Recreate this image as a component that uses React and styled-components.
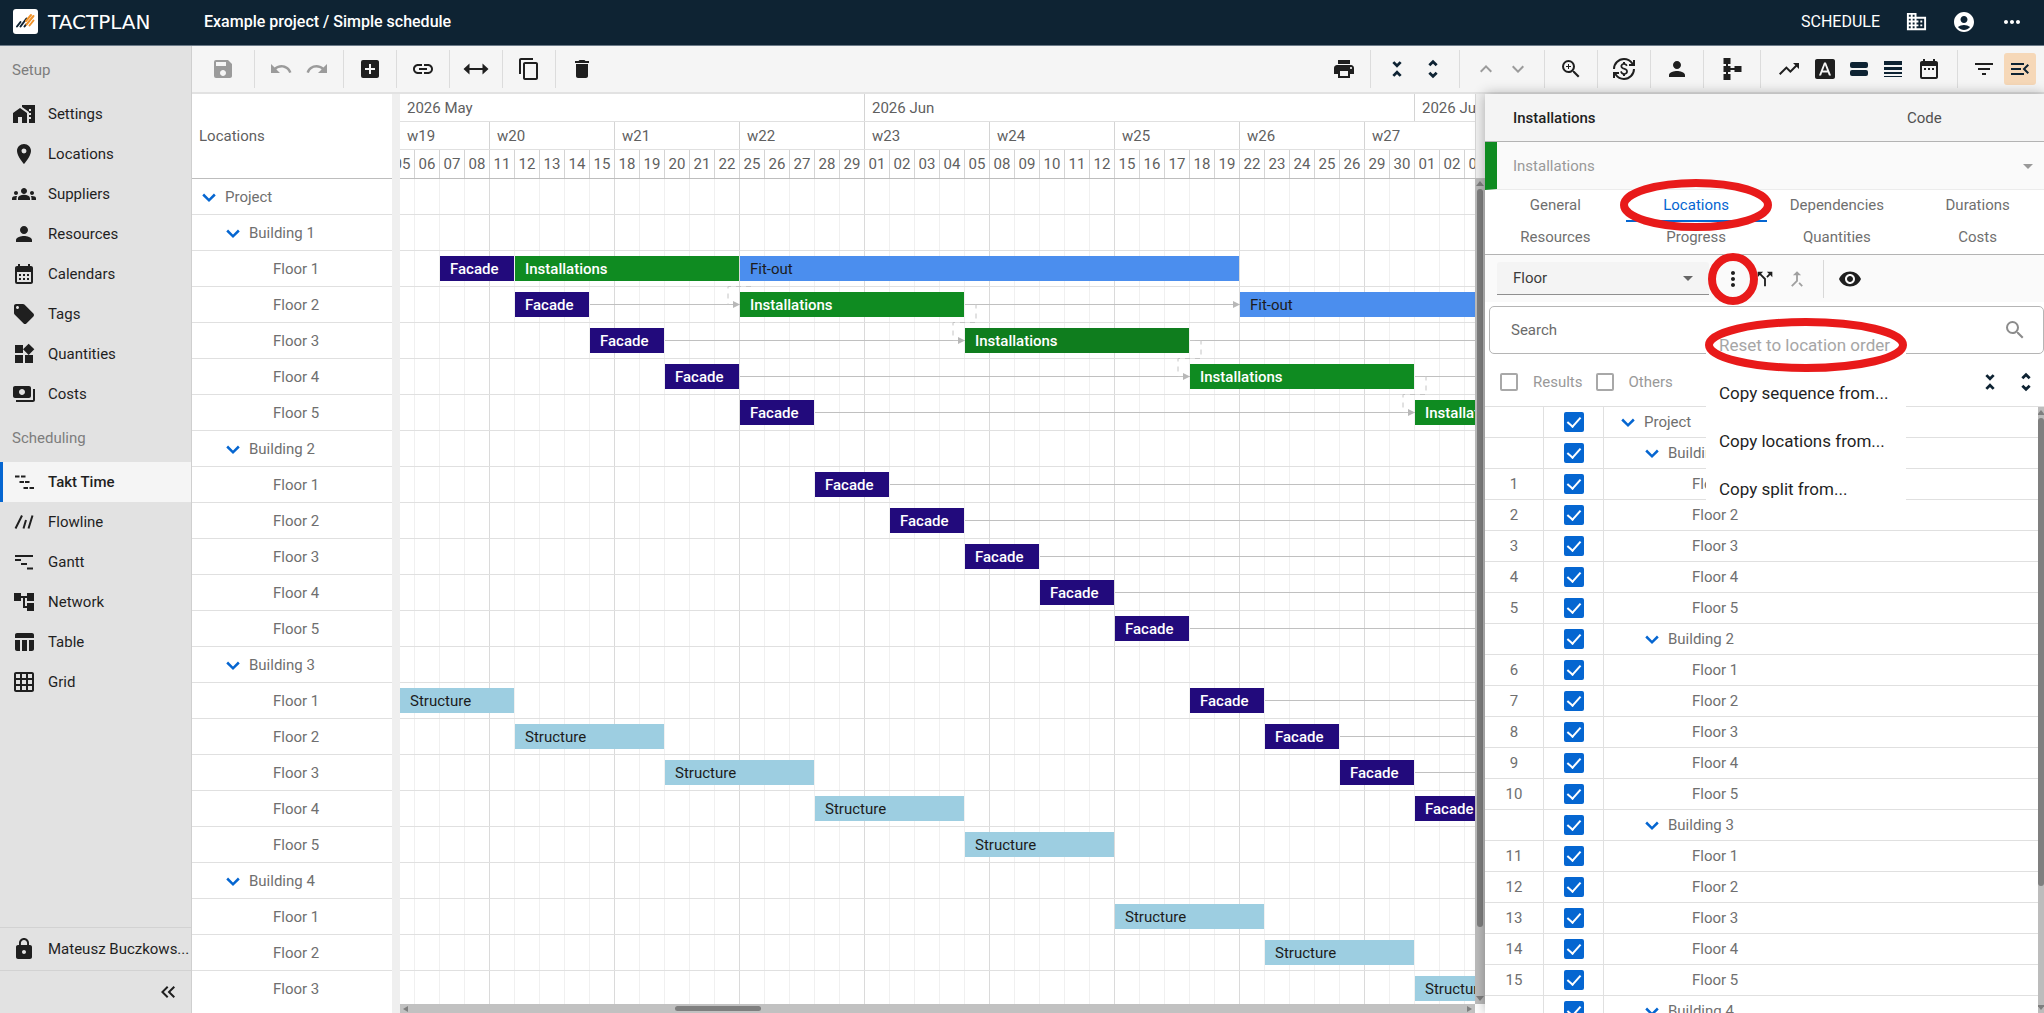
import React from "react"
import styled, { createGlobalStyle, css } from "styled-components"
import {
  MdAccountCircle,
  MdAccountTree,
  MdAddBox,
  MdArrowDropDown,
  MdCalendarMonth,
  MdCallMerge,
  MdCallSplit,
  MdContentCopy,
  MdCurrencyExchange,
  MdDateRange,
  MdDelete,
  MdDomain,
  MdFilterList,
  MdFontDownload,
  MdGridOn,
  MdGroups,
  MdHomeWork,
  MdKeyboardArrowDown,
  MdKeyboardArrowUp,
  MdKeyboardDoubleArrowLeft,
  MdLink,
  MdLocalOffer,
  MdLocationOn,
  MdLock,
  MdMenuOpen,
  MdMoreHoriz,
  MdMoreVert,
  MdPayments,
  MdPerson,
  MdPrint,
  MdRedo,
  MdSave,
  MdSearch,
  MdTableChart,
  MdTrendingUp,
  MdUndo,
  MdVisibility,
  MdWidgets,
  MdZoomIn,
} from "react-icons/md"

const colors = {
  navy: "#0e2333",
  blue: "#0566d1",
  line: "#e0e0e0",
  lineDark: "#bdbdbd",
  text: "#1f1f1f",
  muted: "#6f6f6f",
  facade: "#220a7c",
  installations: "#0f8b21",
  fitout: "#4b8eee",
  structure: "#9dcee1",
  marker: "#e81a1a",
}

const GlobalStyle = createGlobalStyle`
  * {
    box-sizing: border-box;
  }
  body {
    margin: 0;
    font-family: Roboto, "Liberation Sans", sans-serif;
    font-size: 15px;
    color: ${colors.text};
    background: #fff;
    overflow: hidden;
  }
  button, input, select {
    font: inherit;
    color: inherit;
    border: 0;
    padding: 0;
    margin: 0;
    background: none;
  }
  svg {
    display: block;
    flex-shrink: 0;
  }
`

const Page = styled.div`
  display: flex;
  flex-direction: column;
  height: 100vh;
`

/* ---------- top bar ---------- */

const TopBar = styled.header`
  display: flex;
  align-items: center;
  flex: 0 0 46px;
  padding: 0 8px 2px 13px;
  background: ${colors.navy};
  border-bottom: 1px solid #6b7a88;
  color: #fff;
`
const Brand = styled.a`
  display: flex;
  align-items: center;
  gap: 10px;
  width: 191px;
  color: #fff;
  text-decoration: none;
  font-family: "DejaVu Sans", sans-serif;
  font-size: 20px;
`
const Title = styled.h1`
  flex: 1;
  margin: 0;
  font-size: 16px;
  font-weight: 500;
`
const ScheduleLink = styled.a`
  color: #fff;
  font-size: 16px;
  text-decoration: none;
  margin-right: 12px;
`
const TopButton = styled.button`
  display: grid;
  place-items: center;
  width: 48px;
  height: 40px;
`

/* ---------- sidebar ---------- */

const Main = styled.div`
  display: flex;
  flex: 1;
  min-height: 0;
`
const Sidebar = styled.nav`
  display: flex;
  flex-direction: column;
  flex: 0 0 192px;
  min-width: 0;
  background: #e2e2e2;
  border-right: 1px solid #cfcfcf;
`
const SectionLabel = styled.div`
  padding: 0 12px;
  line-height: 48px;
  color: #7d7d7d;
`
const NavItem = styled.a`
  display: flex;
  align-items: center;
  gap: 12px;
  height: 40px;
  padding-left: 9px;
  border-left: 3px solid transparent;
  color: ${colors.text};
  text-decoration: none;
  ${p =>
    p.$active &&
    css`
      background: #f5f5f5;
      border-color: ${colors.blue};
      font-weight: 500;
    `};
`
const SidebarFooter = styled.div`
  margin-top: auto;
`
const UserRow = styled.a`
  display: flex;
  align-items: center;
  gap: 12px;
  height: 44px;
  padding-left: 12px;
  border-top: 1px solid #d2d2d2;
  border-bottom: 1px solid #d2d2d2;
  color: ${colors.text};
  text-decoration: none;
  white-space: nowrap;
`
const CollapseRow = styled.div`
  display: flex;
  justify-content: flex-end;
  align-items: center;
  height: 42px;
  padding-right: 11px;
`

/* ---------- toolbar ---------- */

const Content = styled.main`
  display: flex;
  flex-direction: column;
  flex: 1;
  min-width: 0;
`
const ToolbarRow = styled.div`
  display: flex;
  align-items: center;
  flex: 0 0 48px;
  background: #f5f5f5;
  border-bottom: 2px solid #e2e2e2;
`
const Spacer = styled.div`
  flex: 1;
`
const ToolGroup = styled.div`
  display: flex;
  align-items: center;
  gap: ${p => p.$gap || 0}px;
  height: 38px;
  padding: 0 ${p => p.$pad || 8}px;
  border-right: ${p => (p.$last ? "0" : "1px solid #dcdcdc")};
`
const ToolButton = styled.button`
  display: grid;
  place-items: center;
  width: ${p => (p.$tight ? 32 : 36)}px;
  height: 32px;
  border-radius: 3px;
  color: ${p => (p.$on ? colors.navy : colors.text)};
  background: ${p => (p.$on ? "#f6d8b8" : "none")};
  &:disabled {
    color: #9b9b9b;
  }
`

/* ---------- schedule ---------- */

const Workspace = styled.div`
  display: flex;
  flex: 1;
  min-height: 0;
`
const LocationTree = styled.div`
  flex: 0 0 200px;
  overflow: hidden;
`
const TreeHeader = styled.div`
  display: flex;
  align-items: center;
  height: 85px;
  padding-left: 7px;
  border-bottom: 1px solid ${colors.lineDark};
  color: #5f5f5f;
`
const TreeRow = styled.div`
  display: flex;
  align-items: center;
  height: 36px;
  padding-left: ${p => 5 + p.$level * 24}px;
  border-bottom: 1px solid ${colors.line};
  color: ${colors.muted};
  &:last-child {
    border-bottom: 0;
  }
`
const Toggle = styled.button`
  display: grid;
  place-items: center;
  width: 24px;
  height: 24px;
  margin-right: 4px;
  color: ${colors.blue};
`
const ToggleGap = styled.span`
  width: 28px;
`
const Splitter = styled.div`
  flex: 0 0 8px;
  background: #efefef;
`
const Timeline = styled.section`
  display: flex;
  flex-direction: column;
  flex: 1;
  min-width: 0;
`
const Clip = styled.div`
  flex: ${p => (p.$grow ? "1" : "none")};
  overflow: hidden;
`
const DayGrid = styled.div`
  display: grid;
  grid-template-columns: repeat(45, 25px);
  margin-left: -10px;
  height: ${p => p.$height}px;
  border-bottom: 1px solid ${p => p.$border || colors.line};
`
const HeadCell = styled.div`
  grid-column: span ${p => p.$span};
  display: flex;
  align-items: center;
  justify-content: ${p => (p.$span === 1 ? "center" : "flex-start")};
  padding-left: ${p => (p.$span === 1 ? 0 : p.$first ? 17 : 7)}px;
  border-right: 1px solid #d4d4d4;
  color: #5f5f5f;
  white-space: nowrap;
  overflow: hidden;
`
const Canvas = styled.div`
  position: relative;
  background-image: linear-gradient(90deg, #dadada 1px, transparent 1px),
    linear-gradient(90deg, #f0f0f0 1px, transparent 1px);
  background-size: 125px 100%, 25px 100%;
  background-position: 89px 0, 14px 0;
`
const Bar = styled.div`
  grid-row: 1;
  grid-column: ${p => p.$from + 1} / ${p => p.$to + 1};
  align-self: center;
  display: flex;
  align-items: center;
  height: 25px;
  padding-left: ${p => (p.$from === 0 ? 20 : 10)}px;
  margin-right: 1px;
  background: ${p => p.$color};
  color: ${p => (p.$light ? "#fff" : "#1c1c1c")};
  font-weight: ${p => (p.$light ? 500 : 400)};
  white-space: nowrap;
  overflow: hidden;
`
const Link = styled.div`
  grid-row: 1;
  grid-column: ${p => p.$from + 1} / ${p => p.$to + 1};
  align-self: center;
  height: 1px;
  background: #c0c0c0;
`
const Dashes = styled.svg`
  position: absolute;
  inset: 0;
  pointer-events: none;
`
const TrackY = styled.div`
  display: flex;
  flex-direction: column;
  align-items: center;
  flex: 0 0 ${p => p.$size}px;
  overflow: hidden;
`
const TrackHead = styled.div`
  flex: 0 0 84px;
  align-self: stretch;
  background: #f1f1f1;
  border-left: 1px solid #d8d8d8;
`
const TrackBody = styled.div`
  display: flex;
  flex-direction: column;
  align-items: center;
  justify-content: space-between;
  flex: 1;
  align-self: stretch;
  padding: 3px 0;
  background: #bcbcbc;
`
const TrackFoot = styled.div`
  flex: 0 0 9px;
`
const ThumbY = styled.div`
  flex: 0 0 ${p => p.$length};
  width: 6px;
  margin-top: 3px;
  border-radius: 3px;
  background: #7f7f7f;
`
const Arrow = styled.i`
  width: 0;
  height: 0;
  border: 4px solid transparent;
  ${p => p.$dir === "up" && "border-bottom: 5px solid #7f7f7f; border-top: 0;"}
  ${p => p.$dir === "down" && "border-top: 5px solid #7f7f7f; border-bottom: 0;"}
  ${p => p.$dir === "left" && "border-right: 5px solid #7f7f7f; border-left: 0; border-top-width: 3px; border-bottom-width: 3px;"}
  ${p => p.$dir === "right" && "border-left: 5px solid #7f7f7f; border-right: 0; border-top-width: 3px; border-bottom-width: 3px;"}
`
const TrackX = styled.div`
  display: flex;
  align-items: center;
  flex: 0 0 9px;
  padding: 0 3px;
  background: #c1c1c1;
`
const ThumbX = styled.div`
  width: 8%;
  height: 5px;
  margin-left: 25%;
  margin-right: auto;
  border-radius: 3px;
  background: #7f7f7f;
`

/* ---------- details panel ---------- */

const Panel = styled.aside`
  position: relative;
  display: flex;
  flex-direction: column;
  flex: 0 0 559px;
  background: #fff;
  box-shadow: 0 0 12px rgba(0, 0, 0, 0.3);
`
const PanelHead = styled.div`
  display: grid;
  grid-template-columns: 394px 1fr;
  align-items: center;
  flex: 0 0 48px;
  padding-left: 28px;
  background: #f4f4f4;
  border-bottom: 1px solid #b3b3b3;
  color: #505050;
`
const PanelTitle = styled.h2`
  margin: 0;
  font-size: 15px;
  font-weight: 500;
  color: ${colors.text};
`
const TaskField = styled.label`
  display: flex;
  align-items: center;
  flex: 0 0 48px;
  padding-right: 4px;
  background: #fafafa;
  border-left: 12px solid ${colors.installations};
  border-bottom: 1px solid #ececec;
  color: #999;
`
const PlainSelect = styled.select`
  appearance: none;
  flex: 1;
  height: 32px;
  padding-left: 16px;
  outline: 0;
  opacity: 1;
`
const Tabs = styled.div`
  display: grid;
  grid-template-columns: repeat(4, 1fr);
  grid-auto-rows: 32px;
  flex: none;
  margin-right: -4px;
  border-bottom: 1px solid #b3b3b3;
`
const Tab = styled.button`
  position: relative;
  color: ${p => (p.$active ? colors.blue : colors.muted)};
  border-bottom: 2px solid ${p => (p.$active ? colors.blue : "transparent")};
`
const Ring = styled.svg`
  position: absolute;
  left: 50%;
  top: 50%;
  transform: translate(-50%, -50%);
  z-index: 3;
  fill: none;
  stroke: ${colors.marker};
  stroke-width: 8;
  pointer-events: none;
`
const StripRow = styled.div`
  display: flex;
  align-items: center;
  flex: 0 0 47px;
  padding-left: 12px;
  background: #fafafa;
`
const LevelField = styled.label`
  display: flex;
  align-items: center;
  width: 212px;
  margin-right: 8px;
  padding-right: 9px;
  color: #3c3c3c;
  background: #f4f4f4;
  border-bottom: 1px solid #8f8f8f;
  border-radius: 3px 3px 0 0;
  svg {
    color: #666;
  }
`
const StripButton = styled.button`
  position: relative;
  display: grid;
  place-items: center;
  width: 32px;
  height: 32px;
  &:disabled {
    color: #a0a0a0;
  }
`
const StripDivider = styled.span`
  width: 1px;
  height: 38px;
  margin: 0 10px;
  background: #d8d8d8;
`
const SearchField = styled.label`
  display: flex;
  align-items: center;
  flex: 0 0 48px;
  margin: 4px 0 0 4px;
  padding: 0 16px 0 21px;
  border: 1px solid #b5b5b5;
  border-radius: 5px;
  color: #8c8c8c;
`
const SearchInput = styled.input`
  flex: 1;
  outline: 0;
  color: #333;
  &::placeholder {
    color: #6b6b6b;
    opacity: 1;
  }
`
const FilterRow = styled.div`
  display: flex;
  align-items: center;
  flex: 0 0 52px;
  padding: 4px 0 0 15px;
  color: #999;
`
const FilterLabel = styled.label`
  display: flex;
  align-items: center;
  gap: 15px;
  margin-right: 13px;
`
const Check = styled.input`
  appearance: none;
  display: block;
  width: ${p => (p.$large ? 20 : 18)}px;
  height: ${p => (p.$large ? 20 : 18)}px;
  border: 2px solid #a8a8a8;
  border-radius: 2px;
  &:checked {
    background: ${colors.blue};
    border-color: ${colors.blue};
  }
  &:checked::after {
    content: "";
    display: block;
    width: 6px;
    height: 11px;
    margin: 0 auto;
    border: solid #fff;
    border-width: 0 2px 2px 0;
    transform: rotate(42deg);
  }
`
const ListArea = styled.div`
  display: flex;
  flex: 1;
  min-height: 0;
  overflow: hidden;
  border-top: 1px solid ${colors.line};
`
const ListClip = styled.div`
  flex: 1;
  overflow: hidden;
`
const LocationTable = styled.table`
  width: 100%;
  table-layout: fixed;
  border-collapse: separate;
  border-spacing: 0;
  color: ${colors.muted};
`
const Cell = styled.td`
  width: ${p => p.$width || "auto"};
  height: 31px;
  padding: 0;
  text-align: ${p => (p.$center ? "center" : "left")};
  border-bottom: 1px solid ${colors.line};
  border-right: ${p => (p.$width ? "1px solid " + colors.line : "0")};
  input {
    margin: 0 auto;
  }
`
const CellTree = styled.div`
  display: flex;
  align-items: center;
  padding-left: ${p => 12 + p.$level * 24}px;
`
const Menu = styled.ul`
  position: absolute;
  top: 231px;
  left: 221px;
  z-index: 2;
  display: flex;
  flex-direction: column;
  gap: 8px;
  width: 200px;
  margin: 0;
  padding: 0;
  list-style: none;
  background: #fff;
`
const MenuItem = styled.li`
  position: relative;
`
const MenuButton = styled.button`
  width: 100%;
  height: 40px;
  padding-left: 13px;
  text-align: left;
  white-space: nowrap;
  font-size: 17px;
  &:disabled {
    color: #a6a6a6;
  }
`

/* ---------- drawn icons ---------- */

const Logo = () => (
  <svg width="25" height="25" viewBox="0 0 25 25">
    <rect width="25" height="25" rx="3" fill="#fff" />
    <g strokeWidth="2" strokeLinecap="round" fill="none">
      <path d="M4 17.500l3.500-4.500M7.500 17.500l6-8M11.500 17.500l1.500-2" stroke={colors.navy} />
      <path d="M13 12l5-6M13.500 15.500l7-8.500M16.500 16.500l4-5" stroke="#f0932b" />
    </g>
  </svg>
)

const Icon = ({ d, size = 24, width = 2, fill = "none", stroke = "currentColor" }) => (
  <svg width={size} height={size} viewBox="0 0 24 24" fill={fill} stroke={stroke} strokeWidth={width}>
    <path d={d} />
  </svg>
)

const ArrowsIcon = () => (
  <svg width="26" height="24" viewBox="0 0 26 24" fill="currentColor">
    <path d="M.500 12l6-5.500V11h13V6.500l6 5.500-6 5.500V13h-13v4.500z" />
  </svg>
)
const FoldIcon = () => <Icon d="M8 4.500l4 4 4-4M8 19.500l4-4 4 4" size={22} width={3} stroke={colors.navy} />
const UnfoldIcon = () => <Icon d="M8 8l4-4 4 4M8 16l4 4 4-4" size={22} width={3} stroke={colors.navy} />
const TaktIcon = () => <Icon d="M3 6.500h4.500M9 6.500h4.500M7.500 12h4.500M13 12h4.500M11.500 18h4.500M17.500 18h4.500" />
const FlowlineIcon = () => <Icon d="M3.500 18.500L10 5.500M11.500 18.500L14 10M16.500 18.500L20.500 5.500" />
const GanttIcon = () => <Icon d="M3 6h18M3 10h6M9 14h6M15 18.500h6" />
const BranchIcon = () => (
  <svg width="24" height="24" viewBox="0 0 24 24" fill="currentColor">
    <path d="M3.500 1h7v6h-2.500v2h2.500v2h4V9h7v6h-7v-2h-4v2H8v2h2.500v6h-7v-6H6v-2H3.500V9H6V7H3.500z" />
  </svg>
)
const BarsIcon = () => (
  <svg width="20" height="20" viewBox="0 0 20 20" fill={colors.navy}>
    <rect x="1" y="3" width="18" height="6" rx="2" />
    <rect x="1" y="11" width="18" height="6" rx="2" />
  </svg>
)
const LinesIcon = () => (
  <svg width="20" height="20" viewBox="0 0 20 20" fill={colors.navy}>
    <rect x="1" y="2" width="18" height="4" />
    <rect x="1" y="8" width="18" height="3" />
    <rect x="1" y="13" width="18" height="2" />
    <rect x="1" y="17" width="18" height="1" />
  </svg>
)

/* ---------- data ---------- */

const setupItems = [
  ["Settings", MdHomeWork],
  ["Locations", MdLocationOn],
  ["Suppliers", MdGroups],
  ["Resources", MdPerson],
  ["Calendars", MdCalendarMonth],
  ["Tags", MdLocalOffer],
  ["Quantities", MdWidgets],
  ["Costs", MdPayments],
]
const schedulingItems = [
  ["Takt Time", TaktIcon],
  ["Flowline", FlowlineIcon],
  ["Gantt", GanttIcon],
  ["Network", MdAccountTree],
  ["Table", MdTableChart],
  ["Grid", MdGridOn],
]

const floors = [1, 2, 3, 4, 5]
const locations = [{ name: "Project", level: 0 }]
let counter = 0
;[1, 2, 3, 4].forEach(b => {
  locations.push({ name: `Building ${b}`, level: 1 })
  floors.forEach(f => {
    counter += 1
    locations.push({ name: `Floor ${f}`, level: 2, order: counter })
  })
})

const months = [["2026 May", 19], ["2026 Jun", 22], ["2026 Jul", 4]]
const weeks = [["w19", 4], ["w20", 5], ["w21", 5], ["w22", 5], ["w23", 5], ["w24", 5], ["w25", 5], ["w26", 5], ["w27", 5]]
const days = (
  "05 06 07 08 11 12 13 14 15 18 19 20 21 22 25 26 27 28 29 " +
  "01 02 03 04 05 08 09 10 11 12 15 16 17 18 19 22 23 24 25 26 29 30 01 02 03"
).split(" ")

const END = 45
const kinds = {
  F: ["Facade", colors.facade, true],
  I: ["Installations", colors.installations, true],
  O: ["Fit-out", colors.fitout, false],
  S: ["Structure", colors.structure, false],
}
// row index -> [kind, first day, last day]
const bars = {
  2: [["F", 2, 5], ["I", 5, 14], ["O", 14, 34]],
  3: [["F", 5, 8], ["I", 14, 23], ["O", 34, END]],
  4: [["F", 8, 11], ["I", 23, 32, "#0f7d1e"]],
  5: [["F", 11, 14], ["I", 32, 41]],
  6: [["F", 14, 17], ["I", 41, END]],
  8: [["F", 17, 20]],
  9: [["F", 20, 23]],
  10: [["F", 23, 26]],
  11: [["F", 26, 29]],
  12: [["F", 29, 32]],
  14: [["S", 0, 5], ["F", 32, 35]],
  15: [["S", 5, 11], ["F", 35, 38]],
  16: [["S", 11, 17], ["F", 38, 41]],
  17: [["S", 17, 23], ["F", 41, END]],
  18: [["S", 23, 29]],
  20: [["S", 29, 35]],
  21: [["S", 35, 41]],
  22: [["S", 41, END]],
}
const links = {
  3: [[8, 14], [23, 34]],
  4: [[11, 23], [32, END]],
  5: [[14, 32], [41, END]],
  6: [[17, 41]],
  8: [[20, END]],
  9: [[23, END]],
  10: [[26, END]],
  11: [[29, END]],
  12: [[32, END]],
  14: [[35, END]],
  15: [[38, END]],
  16: [[41, END]],
}
const dashed = [[3, 23], [4, 32], [5, 41]]
const arrows = [[3, 14], [3, 34], [4, 23], [5, 32], [6, 41]]

const tabs = ["General", "Locations", "Dependencies", "Durations", "Resources", "Progress", "Quantities", "Costs"]
const menuItems = ["Reset to location order", "Copy sequence from...", "Copy locations from...", "Copy split from..."]

const dayX = day => day * 25 - 10
const rowY = row => row * 36 + 17

/* ---------- parts ---------- */

const Marker = ({ rx, ry }) => (
  <Ring width={rx * 2 + 8} height={ry * 2 + 8} aria-hidden="true">
    <ellipse cx={rx + 4} cy={ry + 4} rx={rx} ry={ry} />
  </Ring>
)

const TreeToggle = ({ location }) =>
  location.level < 2 ? (
    <Toggle aria-label={`Collapse ${location.name}`}>
      <Icon d="M5 9l7 7 7-7" size={20} width={3} />
    </Toggle>
  ) : (
    <ToggleGap />
  )

const Nav = () => (
  <Sidebar>
    <SectionLabel>Setup</SectionLabel>
    {setupItems.map(([name, Glyph]) => (
      <NavItem key={name} href="#">
        <Glyph size={24} />
        {name}
      </NavItem>
    ))}
    <SectionLabel>Scheduling</SectionLabel>
    {schedulingItems.map(([name, Glyph]) => (
      <NavItem key={name} href="#" $active={name === "Takt Time"}>
        <Glyph size={24} />
        {name}
      </NavItem>
    ))}
    <SidebarFooter>
      <UserRow href="#">
        <MdLock size={24} />
        Mateusz Buczkows...
      </UserRow>
      <CollapseRow>
        <button aria-label="Collapse sidebar">
          <MdKeyboardDoubleArrowLeft size={24} />
        </button>
      </CollapseRow>
    </SidebarFooter>
  </Sidebar>
)

const Toolbar = () => (
  <ToolbarRow>
    <ToolGroup $pad={13}>
      <ToolButton disabled aria-label="Save"><MdSave size={24} /></ToolButton>
    </ToolGroup>
    <ToolGroup>
      <ToolButton disabled aria-label="Undo"><MdUndo size={24} /></ToolButton>
      <ToolButton disabled aria-label="Redo"><MdRedo size={24} /></ToolButton>
    </ToolGroup>
    <ToolGroup>
      <ToolButton aria-label="Add"><MdAddBox size={24} /></ToolButton>
    </ToolGroup>
    <ToolGroup>
      <ToolButton aria-label="Link"><MdLink size={24} /></ToolButton>
    </ToolGroup>
    <ToolGroup>
      <ToolButton aria-label="Move"><ArrowsIcon /></ToolButton>
    </ToolGroup>
    <ToolGroup>
      <ToolButton aria-label="Copy"><MdContentCopy size={24} /></ToolButton>
    </ToolGroup>
    <ToolGroup $last>
      <ToolButton aria-label="Delete"><MdDelete size={24} /></ToolButton>
    </ToolGroup>
    <Spacer />
    <ToolGroup>
      <ToolButton aria-label="Print"><MdPrint size={24} /></ToolButton>
    </ToolGroup>
    <ToolGroup>
      <ToolButton aria-label="Collapse all"><FoldIcon /></ToolButton>
      <ToolButton aria-label="Expand all"><UnfoldIcon /></ToolButton>
    </ToolGroup>
    <ToolGroup $pad={10}>
      <ToolButton $tight disabled aria-label="Up"><MdKeyboardArrowUp size={24} /></ToolButton>
      <ToolButton $tight disabled aria-label="Down"><MdKeyboardArrowDown size={24} /></ToolButton>
    </ToolGroup>
    <ToolGroup>
      <ToolButton aria-label="Zoom"><MdZoomIn size={24} /></ToolButton>
    </ToolGroup>
    <ToolGroup>
      <ToolButton aria-label="Currency"><MdCurrencyExchange size={24} /></ToolButton>
    </ToolGroup>
    <ToolGroup>
      <ToolButton aria-label="Resources"><MdPerson size={24} /></ToolButton>
    </ToolGroup>
    <ToolGroup $pad={10}>
      <ToolButton aria-label="Structure"><BranchIcon /></ToolButton>
    </ToolGroup>
    <ToolGroup $pad={10}>
      <ToolButton aria-label="Trend"><MdTrendingUp size={24} /></ToolButton>
      <ToolButton aria-label="Labels"><MdFontDownload size={24} /></ToolButton>
      <ToolButton $tight aria-label="Bars"><BarsIcon /></ToolButton>
      <ToolButton aria-label="Row height"><LinesIcon /></ToolButton>
      <ToolButton aria-label="Dates"><MdDateRange size={24} /></ToolButton>
    </ToolGroup>
    <ToolGroup $last $gap={2}>
      <ToolButton aria-label="Filter"><MdFilterList size={24} /></ToolButton>
      <ToolButton $tight $on aria-label="Toggle panel"><MdMenuOpen size={24} /></ToolButton>
    </ToolGroup>
  </ToolbarRow>
)

const Schedule = () => (
  <>
    <LocationTree>
      <TreeHeader>Locations</TreeHeader>
      {locations.slice(0, 23).map((location, i) => (
        <TreeRow key={i} $level={location.level}>
          <TreeToggle location={location} />
          {location.name}
        </TreeRow>
      ))}
    </LocationTree>
    <Splitter />
    <Timeline>
      <Clip>
        <DayGrid $height={28}>
          {months.map(([name, span], i) => (
            <HeadCell key={name} $span={span} $first={i === 0}>{name}</HeadCell>
          ))}
        </DayGrid>
        <DayGrid $height={28}>
          {weeks.map(([name, span], i) => (
            <HeadCell key={name} $span={span} $first={i === 0}>{name}</HeadCell>
          ))}
        </DayGrid>
        <DayGrid $height={29} $border={colors.lineDark}>
          {days.map((day, i) => (
            <HeadCell key={i} $span={1}>{day}</HeadCell>
          ))}
        </DayGrid>
      </Clip>
      <Clip $grow>
        <Canvas>
          {locations.slice(0, 23).map((location, row) => (
            <DayGrid key={row} $height={36}>
              {(links[row] || []).map(([from, to]) => (
                <Link key={from} $from={from} $to={to} />
              ))}
              {(bars[row] || []).map(([kind, from, to, shade]) => (
                <Bar key={from} $from={from} $to={to} $color={shade || kinds[kind][1]} $light={kinds[kind][2]}>
                  {kinds[kind][0]}
                </Bar>
              ))}
            </DayGrid>
          ))}
          <Dashes width="100%" height="100%" fill="none" stroke="#c4c4c4" strokeDasharray="5 5">
            <path d={`M${dayX(14) + 11} ${rowY(2) + 18.5}h-23v18`} />
            {dashed.map(([row, day]) => (
              <path key={row} d={`M${dayX(day)} ${rowY(row) + 0.5}h11v18h-23v18h6`} />
            ))}
            {arrows.map(([row, day]) => (
              <path key={`${row}-${day}`} d={`M${dayX(day) - 7} ${rowY(row) - 3}l7 3.500-7 3.500z`} fill="#b8b8b8" stroke="none" />
            ))}
          </Dashes>
        </Canvas>
      </Clip>
      <TrackX>
        <Arrow $dir="left" />
        <ThumbX />
        <Arrow $dir="right" />
      </TrackX>
    </Timeline>
    <TrackY $size={10}>
      <TrackHead />
      <TrackBody>
        <Arrow $dir="up" />
        <ThumbY $length="90%" />
        <Spacer />
        <Arrow $dir="down" />
      </TrackBody>
      <TrackFoot />
    </TrackY>
  </>
)

const Details = () => (
  <Panel>
    <PanelHead>
      <PanelTitle>Installations</PanelTitle>
      <span>Code</span>
    </PanelHead>
    <TaskField>
      <PlainSelect disabled aria-label="Task type">
        <option>Installations</option>
      </PlainSelect>
      <MdArrowDropDown size={24} />
    </TaskField>
    <Tabs role="tablist">
      {tabs.map(tab => (
        <Tab key={tab} role="tab" $active={tab === "Locations"}>
          {tab}
          {tab === "Locations" && <Marker rx={72} ry={22} />}
        </Tab>
      ))}
    </Tabs>
    <StripRow>
      <LevelField>
        <PlainSelect aria-label="Location level">
          <option>Floor</option>
        </PlainSelect>
        <MdArrowDropDown size={24} />
      </LevelField>
      <StripButton aria-label="More options">
        <MdMoreVert size={24} />
        <Marker rx={21} ry={22} />
      </StripButton>
      <StripButton aria-label="Split"><MdCallSplit size={22} /></StripButton>
      <StripButton disabled aria-label="Merge"><MdCallMerge size={22} /></StripButton>
      <StripDivider />
      <StripButton aria-label="Show"><MdVisibility size={24} /></StripButton>
    </StripRow>
    <SearchField>
      <SearchInput placeholder="Search" aria-label="Search" />
      <MdSearch size={24} />
    </SearchField>
    <FilterRow>
      <FilterLabel>
        <Check type="checkbox" />
        Results
      </FilterLabel>
      <FilterLabel>
        <Check type="checkbox" />
        Others
      </FilterLabel>
      <Spacer />
      <ToolButton aria-label="Collapse all"><FoldIcon /></ToolButton>
      <ToolButton aria-label="Expand all"><UnfoldIcon /></ToolButton>
    </FilterRow>
    <ListArea>
      <ListClip>
        <LocationTable>
          <tbody>
            {locations.map((location, i) => (
              <tr key={i}>
                <Cell $width="59px" $center>{location.order}</Cell>
                <Cell $width="60px">
                  <Check $large type="checkbox" defaultChecked aria-label={location.name} />
                </Cell>
                <Cell>
                  <CellTree $level={location.level}>
                    <TreeToggle location={location} />
                    {location.name}
                  </CellTree>
                </Cell>
              </tr>
            ))}
          </tbody>
        </LocationTable>
      </ListClip>
      <TrackY $size={6}>
        <TrackBody>
          <Arrow $dir="up" />
          <ThumbY $length="78%" />
          <Spacer />
          <Arrow $dir="down" />
        </TrackBody>
      </TrackY>
    </ListArea>
    <Menu>
      {menuItems.map((item, i) => (
        <MenuItem key={item}>
          <MenuButton disabled={i === 0}>{item}</MenuButton>
          {i === 0 && <Marker rx={97} ry={23} />}
        </MenuItem>
      ))}
    </Menu>
  </Panel>
)

const App = () => (
  <Page>
    <GlobalStyle />
    <TopBar>
      <Brand href="#">
        <Logo />
        TACTPLAN
      </Brand>
      <Title>Example project / Simple schedule</Title>
      <ScheduleLink href="#">SCHEDULE</ScheduleLink>
      <TopButton aria-label="Company"><MdDomain size={23} /></TopButton>
      <TopButton aria-label="Account"><MdAccountCircle size={24} /></TopButton>
      <TopButton aria-label="More"><MdMoreHoriz size={24} /></TopButton>
    </TopBar>
    <Main>
      <Nav />
      <Content>
        <Toolbar />
        <Workspace>
          <Schedule />
          <Details />
        </Workspace>
      </Content>
    </Main>
  </Page>
)

export default App
